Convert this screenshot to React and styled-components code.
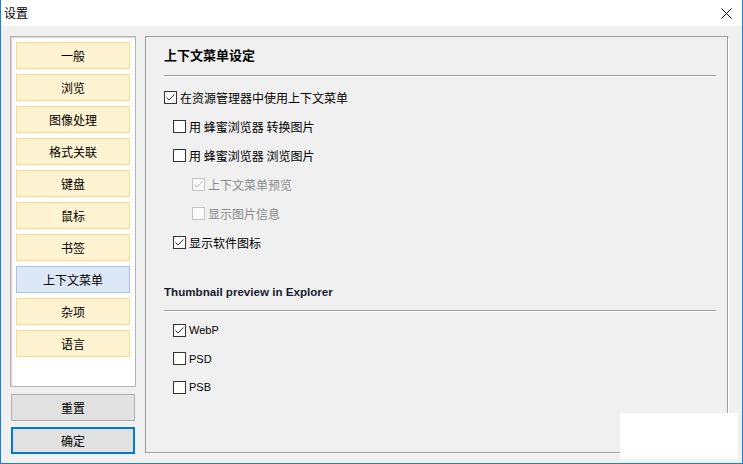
import React from "react";
import styled, { createGlobalStyle } from "styled-components";

const Global = createGlobalStyle`
  html, body { margin: 0; padding: 0; background: #fff; }
  body { font-family: "Noto Sans CJK SC", "Liberation Sans", sans-serif; font-size: 12px; color: #000; }
`;

const Window = styled.div`
  position: relative;
  width: 743px;
  height: 464px;
  box-sizing: border-box;
  border: 1px solid #1a7fd6;
  border-top: none;
  background: #f0f0f0;
  display: flex;
  flex-direction: column;
  overflow: hidden;
`;

const TitleBar = styled.div`
  height: 26px;
  background: #fff;
  display: flex;
  align-items: center;
  justify-content: space-between;
  padding: 0 10px 0 3px;
  flex: none;
`;

const TitleText = styled.span`
  font-size: 12px;
  line-height: 16px;
`;

const Body = styled.div`
  flex: 1;
  display: flex;
  padding: 10px 13px 9px 9px;
  gap: 9px;
  min-height: 0;
`;

const Side = styled.div`
  width: 126px;
  display: flex;
  flex-direction: column;
  flex: none;
`;

const NavList = styled.div`
  height: 351px;
  box-sizing: border-box;
  background: #fff;
  border: 1px solid #b4b4b4;
  box-shadow: inset 1px 1px 0 #d6d6d6;
  padding: 5px 5px;
  display: flex;
  flex-direction: column;
  gap: 5px;
`;

const NavItem = styled.div`
  height: 27px;
  box-sizing: border-box;
  border: 1px solid ${p => (p.$active ? "#a9c1e8" : "#ffd88a")};
  background: ${p => (p.$active ? "#dde8f6" : "#fff3d1")};
  display: flex;
  align-items: center;
  justify-content: center;
  font-size: 12px;
  flex: none;
`;

const ActionButton = styled.div`
  margin: 0 1px;
  height: 27px;
  box-sizing: border-box;
  background: #e1e1e1;
  border: ${p => (p.$default ? "2px solid #0078d7" : "1px solid #adadad")};
  display: flex;
  align-items: center;
  justify-content: center;
  font-size: 12px;
  margin-top: ${p => p.$top}px;
`;

const Panel = styled.div`
  flex: 1;
  box-sizing: border-box;
  border: 1px solid;
  border-color: #a0a0a0 #fff #fff #a0a0a0;
  box-shadow: inset -1px -1px 0 #a0a0a0;
  padding: 9px 12px 0 18px;
  display: flex;
  flex-direction: column;
`;

const Heading = styled.div`
  height: 18px;
  line-height: 18px;
  font-weight: bold;
  font-size: ${p => p.$size}px;
  font-family: ${p => (p.$latin ? '"Liberation Sans", sans-serif' : '"Noto Sans CJK SC", sans-serif')};
  margin-top: ${p => p.$top || 0}px;
  color: ${p => (p.$latin ? "#1a1a2e" : "#000")};
`;

const Separator = styled.div`
  height: 1px;
  background: #a0a0a0;
  border-bottom: 1px solid #fff;
  margin-top: ${p => p.$top}px;
  margin-bottom: ${p => p.$bottom}px;
`;

const Row = styled.div`
  height: ${p => p.$h}px;
  display: flex;
  align-items: center;
  gap: 3px;
  padding-left: ${p => p.$indent}px;
  color: ${p => (p.$disabled ? "#8a8a8a" : "#000")};
  font-size: ${p => (p.$latin ? 11 : 12)}px;
  font-family: ${p => (p.$latin ? '"Liberation Sans", sans-serif' : '"Noto Sans CJK SC", sans-serif')};
`;

const Box = styled.span`
  width: 13px;
  height: 13px;
  box-sizing: border-box;
  border: 1px solid ${p => (p.$disabled ? "#c4c4c4" : "#333")};
  background: ${p => (p.$disabled ? "#fbfbfb" : "#fff")};
  display: inline-flex;
  flex: none;
`;

const Overlay = styled.div`
  position: absolute;
  left: 619px;
  top: 413px;
  width: 118px;
  height: 46px;
  background: #fff;
`;

function Check({ checked, disabled }) {
  return (
    <Box $disabled={disabled}>
      {checked && (
        <svg width="11" height="11" viewBox="0 0 11 11">
          <polyline
            points="1.5,5.5 4,8 9.5,2.5"
            fill="none"
            stroke={disabled ? "#bdbdbd" : "#333"}
            strokeWidth="1"
          />
        </svg>
      )}
    </Box>
  );
}

function Option({ label, checked, disabled, indent, h = 29, latin }) {
  return (
    <Row $indent={indent} $disabled={disabled} $h={h} $latin={latin}>
      <Check checked={checked} disabled={disabled} />
      <span>{label}</span>
    </Row>
  );
}

const nav = ["一般", "浏览", "图像处理", "格式关联", "键盘", "鼠标", "书签", "上下文菜单", "杂项", "语言"];

export default function App() {
  return (
    <>
      <Global />
      <Window>
        <TitleBar>
          <TitleText>设置</TitleText>
          <svg width="11" height="11" viewBox="0 0 11 11">
            <path d="M0.5 0.5 L10.5 10.5 M10.5 0.5 L0.5 10.5" stroke="#000" strokeWidth="1" />
          </svg>
        </TitleBar>
        <Body>
          <Side>
            <NavList>
              {nav.map(n => (
                <NavItem key={n} $active={n === "上下文菜单"}>{n}</NavItem>
              ))}
            </NavList>
            <ActionButton $top={7}>重置</ActionButton>
            <ActionButton $top={6} $default>确定</ActionButton>
          </Side>
          <Panel>
            <Heading $size={13}>上下文菜单设定</Heading>
            <Separator $top={11} $bottom={6} />
            <Option indent={0} checked label="在资源管理器中使用上下文菜单" />
            <Option indent={9} label="用 蜂蜜浏览器 转换图片" />
            <Option indent={9} label="用 蜂蜜浏览器 浏览图片" />
            <Option indent={28} checked disabled label="上下文菜单预览" />
            <Option indent={28} disabled label="显示图片信息" />
            <Option indent={9} checked label="显示软件图标" />
            <Heading $size={11.6} $latin $top={26}>Thumbnail preview in Explorer</Heading>
            <Separator $top={9} $bottom={4} />
            <Option indent={9} h={28.5} latin checked label="WebP" />
            <Option indent={9} h={28.5} latin label="PSD" />
            <Option indent={9} h={28.5} latin label="PSB" />
          </Panel>
        </Body>
        <Overlay />
      </Window>
    </>
  );
}
